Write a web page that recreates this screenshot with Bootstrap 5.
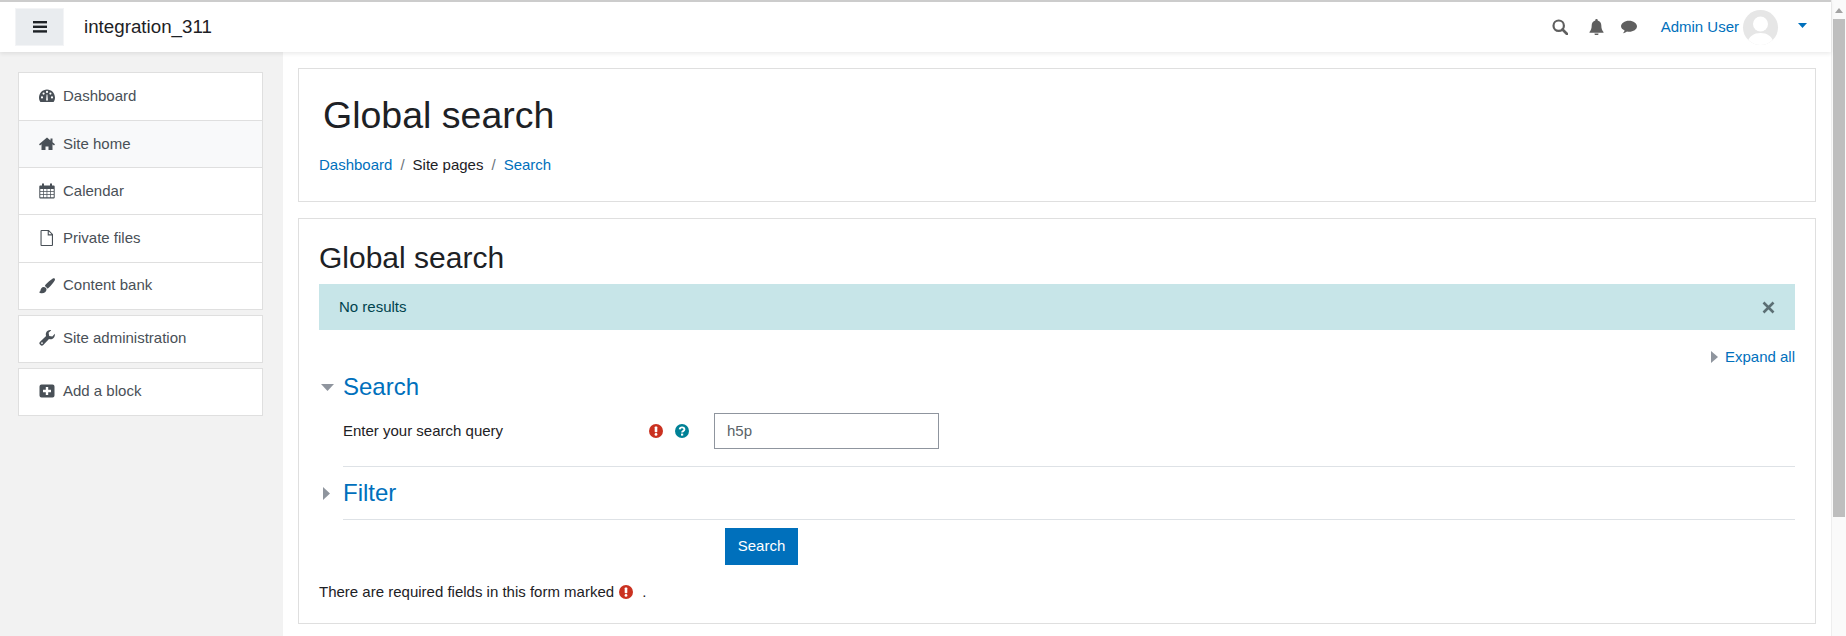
<!DOCTYPE html>
<html lang="en">
<head>
<meta charset="utf-8">
<title>Global search</title>
<link href="https://cdn.jsdelivr.net/npm/bootstrap@5.3.0/dist/css/bootstrap.min.css" rel="stylesheet">
<style>
html,body{height:636px;overflow:hidden}
body{font-family:"Liberation Sans",Arial,sans-serif;font-size:15px;color:#1d2125;background:#fff;display:flex;line-height:22.5px}
a{color:#0070bc;text-decoration:none}
.pg-main{flex:1 1 auto;min-width:0;display:flex;flex-direction:column}
.pg-top{height:52px;border-top:2px solid #ccc;background:#fff;padding:0 22px 0 15px;box-shadow:0 2px 4px rgba(0,0,0,.08);position:relative;z-index:2;flex-wrap:nowrap}
.pg-burger{width:49px;height:38px;background:#e9ecef;border:1px solid #f3f4f6;border-radius:0;padding:0}
.pg-brand{font-size:18.75px;color:#1d2125;margin-left:20px;padding:0}
.pg-ticon{fill:#5f5f5f;display:block}
.pg-avatar{width:35px;height:35px;border-radius:50%;background:#e6e6e6;overflow:hidden;display:block}
.pg-caret{margin:0 2px 4px 20px}
.pg-body{flex:1 1 auto;display:flex;min-height:0}
.pg-side{width:283px;flex:none;background:#f2f2f2;padding:20px 20px 0 18px}
.pg-group{border-radius:0;margin-bottom:5px}
.pg-group .list-group-item{display:flex;align-items:center;height:47.2px;padding:0 0 0 20px;background:#fff;color:#495057;border-color:#dfdfdf;font-size:15px}
.pg-group .list-group-item:first-child{height:48px;padding-bottom:1px}
.pg-group .list-group-item.pg-lead{height:49px}
.pg-group .list-group-item.pg-cur{background:#f8f9fa}
.pg-side svg{width:16px;height:16px;margin-right:8px;flex:none;fill:#495057}
.pg-content{flex:1 1 auto;padding:16px 15px 0 15px;min-width:0}
.pg-card{border-radius:0;border-color:#dfdfdf}
.pg-head{height:134px;margin-bottom:16px;padding:0 20px}
.pg-title{font-size:37.5px;font-weight:400;line-height:45px;margin:24px 0 0 4px}
.pg-crumb{margin:16px 0 0 0;font-size:15px}
.pg-crumb .breadcrumb-item+.breadcrumb-item::before{color:#6a737b}
.pg-crumb .breadcrumb-item{color:#1d2125}
.pg-form{height:406px;padding:21px 20px 0 20px}
.pg-h2{font-size:30px;font-weight:400;line-height:36px;margin:0 0 8px}
.pg-alert{height:46px;margin:0;padding:0 20px;border:0;border-radius:0;background:#c7e5e8;color:#00434e;display:flex;align-items:center;justify-content:space-between}
.pg-expand{height:22px;margin-top:16px;gap:7px}
.pg-sec{height:30px;margin-top:4px}
.pg-sec h3{font-size:24px;line-height:30px;font-weight:400;margin:0;color:#0070bc}
.pg-tog{width:24px;flex:none;padding-left:2px;display:flex;align-items:center}
.pg-row{margin:11px 0 0 24px;height:36px}
.pg-lbl{width:306px;flex:none}
.pg-ico{display:block;flex:none}
.pg-input{width:225px;height:36px;border:1px solid #8f959e;border-radius:0;padding:0 12px 2px;color:#5a6268;font-size:15px;margin-left:25px}
hr.pg-rule{margin:17px 0 0 24px;border:0;border-top:1px solid #dee2e6;opacity:1}
hr.pg-rule2{margin-top:11px}
.pg-sec2{margin-top:11px}
.pg-submit{width:73px;height:37px;padding:0;border-radius:0;margin:8px 0 0 406px;background:#0070bc;border-color:#0070bc;font-size:15px;display:block}
.pg-note{margin:16px 0 0;gap:5px;height:22px}
.pg-scroll{width:15px;flex:none;background:#fafafa;position:relative;border-left:1px solid #eee}
.pg-thumb{height:498px;margin:19px 1px 0 1px;background:#bebebe}
.pg-arrow{width:0;height:0;border-left:4px solid transparent;border-right:4px solid transparent;border-bottom:5px solid #a3a3a3;position:absolute;top:8px;left:3px}
</style>
</head>
<body>
<div class="pg-main">
  <nav class="navbar pg-top d-flex align-items-center justify-content-between">
    <div class="d-flex align-items-center">
      <button class="btn pg-burger d-flex align-items-center justify-content-center" type="button" aria-label="Menu">
        <svg width="14" height="12" viewBox="0 0 14 12" fill="#1d2125"><rect width="14" height="2.4" y="0"/><rect width="14" height="2.4" y="4.6"/><rect width="14" height="2.4" y="9.2"/></svg>
      </button>
      <a class="navbar-brand pg-brand" href="#">integration_311</a>
    </div>
    <div class="d-flex align-items-center">
      <svg class="pg-ticon" width="16" height="16" viewBox="0 0 16 16"><circle cx="6.7" cy="6.7" r="5.2" fill="none" stroke="#5f5f5f" stroke-width="2.2"/><path d="M10.5 10.5 15 15" stroke="#5f5f5f" stroke-width="2.6" stroke-linecap="round"/></svg>
      <svg class="pg-ticon" style="margin-left:21px" width="15" height="16" viewBox="0 0 15 16"><path d="M7.500 0a1.200 1.200 0 0 1 1.200 1.400C11 2 12.300 3.800 12.300 6.300c0 3.700.8 5 2.200 6.700v.8H.5V13c1.400-1.700 2.200-3 2.200-6.700 0-2.500 1.300-4.300 3.600-4.900A1.200 1.200 0 0 1 7.500 0ZM5.500 14.500h4a2 2 0 0 1-4 0Z"/></svg>
      <svg class="pg-ticon" style="margin-left:17px" width="16" height="14" viewBox="0 0 16 14"><path d="M8 .7c4.400 0 8 2.500 8 5.500s-3.600 5.500-8 5.500c-.7 0-1.300-.1-2-.2-1 .9-2.300 1.500-4.200 1.700 1-.9 1.600-1.900 1.800-2.800C1.500 9.400 0 8 0 6.200 0 3.200 3.600.7 8 .7Z"/></svg>
      <a href="#" style="margin-left:24px">Admin User</a>
      <span class="pg-avatar" style="margin-left:4px"><svg width="35" height="35" viewBox="0 0 35 35"><circle cx="17.500" cy="14" r="7.500" fill="#fff"/><path d="M4 35c1-9 7-12 13.500-12S30 26 31 35Z" fill="#fff"/></svg></span>
      <svg class="pg-caret" width="9" height="5" viewBox="0 0 9 5" fill="#0070bc"><path d="M0 0h9L4.500 5Z"/></svg>
    </div>
  </nav>
  <div class="pg-body">
    <aside class="pg-side">
      <div class="list-group pg-group">
        <a class="list-group-item pg-lead" href="#"><svg viewBox="0 0 16 16"><path fill-rule="evenodd" d="M8 1.500C3.600 1.500 0 5.100 0 9.500c0 1.700.5 3.300 1.400 4.500h13.200c.9-1.200 1.400-2.800 1.400-4.500 0-4.400-3.600-8-8-8ZM3 10.500a1.100 1.100 0 1 1 0-2.200 1.100 1.100 0 0 1 0 2.200Zm1.600-3.800a1.100 1.100 0 1 1 0-2.200 1.100 1.100 0 0 1 0 2.200ZM8 5a1.100 1.100 0 1 1 0-2.200A1.100 1.100 0 0 1 8 5Zm3.400 1.700a1.100 1.100 0 1 1 0-2.200 1.100 1.100 0 0 1 0 2.200ZM13 10.500a1.100 1.100 0 1 1 0-2.200 1.100 1.100 0 0 1 0 2.200ZM7.100 12.500 7.600 6.500h.8l.5 6Z"/></svg>Dashboard</a>
        <a class="list-group-item pg-cur" href="#"><svg viewBox="0 0 16 16"><path d="M8 3.500 2.500 8.200V14h4v-3.500h3V14h4V8.200ZM8 1.500 0 8.300l1 1.100 7-6 7 6 1-1.100-2.500-2.100V2.500h-2v2Z"/></svg>Site home</a>
        <a class="list-group-item" href="#"><svg viewBox="0 0 16 16"><path fill-rule="evenodd" d="M1.200 2.500H3V1.300a1 1 0 0 1 2 0v1.200h6V1.300a1 1 0 0 1 2 0v1.200h1.800c.5 0 .9.400.9.900v11.200c0 .5-.4.900-.9.900H1.200a.9.900 0 0 1-.9-.9V3.400c0-.5.400-.9.900-.9ZM1.300 6v2.300h2.800V6Zm3.500 0v2.300h2.800V6Zm3.500 0v2.300h2.900V6Zm3.600 0v2.300h2.800V6ZM1.300 9v2.200h2.800V9Zm3.500 0v2.200h2.800V9Zm3.500 0v2.200h2.900V9Zm3.600 0v2.200h2.800V9ZM1.300 11.900v2.400h2.800v-2.400Zm3.500 0v2.400h2.800v-2.400Zm3.500 0v2.400h2.900v-2.400Zm3.600 0v2.400h2.800v-2.400Z"/></svg>Calendar</a>
        <a class="list-group-item" href="#"><svg viewBox="0 0 16 16"><path fill-rule="evenodd" d="M2.500 0h7.300L14 4.200V15a1 1 0 0 1-1 1H2.500a1 1 0 0 1-1-1V1a1 1 0 0 1 1-1Zm.1 1.100v13.800h10.300V5.400H8.700V1.100Zm7.200.4v2.800h2.800Z"/></svg>Private files</a>
        <a class="list-group-item" href="#"><svg viewBox="0 0 16 16"><path d="M15.600.4c-.5-.4-1.200-.3-1.800.1-2.600 1.800-5 3.800-6.900 5.800-.6.600-1 1.300-1.100 2 1.100.3 1.900 1.100 2.200 2.200.7-.1 1.500-.6 2-1.100 2-1.900 4-4.300 5.700-6.900.4-.7.400-1.600-.1-2.100ZM4.700 8.900C2.600 8.900 1.700 10.800 1.500 12.300c-.1 1-.7 1.500-1.500 1.700.5.700 1.700 1.300 3 1.300 2.400 0 4.400-1.700 4.500-3.600.1-1.500-1.200-2.800-2.800-2.800Z"/></svg>Content bank</a>
      </div>
      <div class="list-group pg-group">
        <a class="list-group-item" href="#"><svg viewBox="0 0 16 16"><path fill-rule="evenodd" d="M15.800 3.800c.4 2.100-.6 4.300-2.600 5.100-1.100.4-2.200.4-3.200 0L4.300 14.900a2 2 0 0 1-2.900 0l-.3-.3a2 2 0 0 1 0-2.900L7.100 6c-.4-1-.4-2.100 0-3.200C7.900.8 10 -.2 12.200.2L9.600 2.800l.6 3.100 3.100.6ZM3 14a.9.900 0 1 0 0-1.800A.9.900 0 0 0 3 14Z"/></svg>Site administration</a>
      </div>
      <div class="list-group pg-group">
        <a class="list-group-item" href="#"><svg viewBox="0 0 16 16"><path fill-rule="evenodd" d="M2.500 1.500h11a2 2 0 0 1 2 2v9a2 2 0 0 1-2 2h-11a2 2 0 0 1-2-2v-9a2 2 0 0 1 2-2ZM6.800 4v2.800H4v2.400h2.800V12h2.400V9.200H12V6.800H9.200V4Z"/></svg>Add a block</a>
      </div>
    </aside>
    <main class="pg-content">
      <div class="card pg-card pg-head">
        <h1 class="pg-title">Global search</h1>
        <nav aria-label="breadcrumb"><ol class="breadcrumb pg-crumb">
          <li class="breadcrumb-item"><a href="#">Dashboard</a></li>
          <li class="breadcrumb-item">Site pages</li>
          <li class="breadcrumb-item"><a href="#">Search</a></li>
        </ol></nav>
      </div>
      <div class="card pg-card pg-form">
        <h2 class="pg-h2">Global search</h2>
        <div class="alert pg-alert" role="alert"><span>No results</span>
          <svg width="13" height="13" viewBox="0 0 13 13"><path d="M1.500 1.500l10 10M11.500 1.500l-10 10" stroke="#5c6f74" stroke-width="2.600"/></svg>
        </div>
        <div class="d-flex justify-content-end align-items-center pg-expand">
          <svg width="7" height="12" viewBox="0 0 7 12" fill="#8f959e"><path d="M0 0l7 6-7 6Z"/></svg><a href="#">Expand all</a>
        </div>
        <div class="d-flex align-items-center pg-sec">
          <span class="pg-tog"><svg width="13" height="7" viewBox="0 0 13 7" fill="#8f959e"><path d="M0 0h13L6.500 7Z"/></svg></span>
          <h3>Search</h3>
        </div>
        <div class="d-flex align-items-center pg-row">
          <label class="pg-lbl" for="q">Enter your search query</label>
          <svg class="pg-ico" width="14" height="14" viewBox="0 0 14 14"><circle cx="7" cy="7" r="7" fill="#ca3120"/><rect x="5.700" y="2.500" width="2.600" height="5.800" rx=".8" fill="#fff"/><circle cx="7" cy="10.400" r="1.400" fill="#fff"/></svg>
          <svg class="pg-ico" style="margin-left:12px" width="14" height="14" viewBox="0 0 14 14"><circle cx="7" cy="7" r="7" fill="#008196"/><path d="M4.700 5.300C4.900 4 5.900 3.400 7 3.400c1.300 0 2.400.8 2.400 2 0 1.700-2.300 1.700-2.300 3" fill="none" stroke="#fff" stroke-width="1.900"/><rect x="6" y="9.600" width="2.200" height="2" fill="#fff"/></svg>
          <input id="q" class="form-control pg-input" type="text" value="h5p">
        </div>
        <hr class="pg-rule">
        <div class="d-flex align-items-center pg-sec pg-sec2">
          <span class="pg-tog"><svg width="7" height="13" viewBox="0 0 7 13" fill="#8f959e" style="margin-left:2px"><path d="M0 0l7 6.500L0 13Z"/></svg></span>
          <h3>Filter</h3>
        </div>
        <hr class="pg-rule pg-rule2">
        <button class="btn btn-primary pg-submit" type="button">Search</button>
        <div class="d-flex align-items-center pg-note">
          <span>There are required fields in this form marked</span>
          <svg class="pg-ico" width="14" height="14" viewBox="0 0 14 14"><circle cx="7" cy="7" r="7" fill="#ca3120"/><rect x="5.700" y="2.500" width="2.600" height="5.800" rx=".8" fill="#fff"/><circle cx="7" cy="10.400" r="1.400" fill="#fff"/></svg>
          <span class="ms-1">.</span>
        </div>
      </div>
    </main>
  </div>
</div>
<div class="pg-scroll"><span class="pg-arrow"></span><div class="pg-thumb"></div></div>
<script src="https://cdn.jsdelivr.net/npm/bootstrap@5.3.0/dist/js/bootstrap.bundle.min.js"></script>
</body>
</html>
